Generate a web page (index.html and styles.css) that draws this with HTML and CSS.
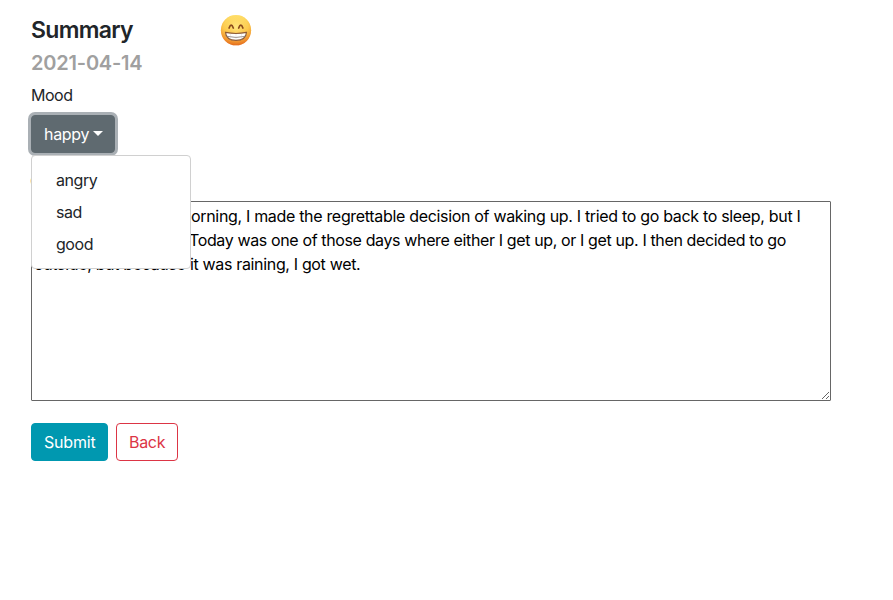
FILE: index.html
```
<!DOCTYPE html>
<html lang="en">
<head>
<meta charset="utf-8">
<title>Summary</title>
<link rel="stylesheet" href="styles.css">
</head>
<body>
<main class="entry">
  <header class="entry-head">
    <h1 class="title">Summary</h1>
    <svg class="mood-icon" viewBox="0 0 32 32" role="img" aria-label="happy">
      <defs>
        <linearGradient id="face" x1="0" y1="0" x2="0" y2="1">
          <stop offset="0" stop-color="#ffe574"/>
          <stop offset=".45" stop-color="#fcc64a"/>
          <stop offset=".8" stop-color="#f3932e"/>
          <stop offset="1" stop-color="#e2661c"/>
        </linearGradient>
        <radialGradient id="glow" cx=".5" cy=".4" r=".6">
          <stop offset="0" stop-color="#ffec88" stop-opacity=".85"/>
          <stop offset=".65" stop-color="#fed153" stop-opacity=".35"/>
          <stop offset="1" stop-color="#e5701b" stop-opacity=".6"/>
        </radialGradient>
      </defs>
      <circle cx="16" cy="15.200" r="15.100" fill="url(#face)"/>
      <circle cx="16" cy="15.200" r="15.100" fill="url(#glow)"/>
      <path d="M9.100 13Q11.200 7.400 13.300 13M18.700 13Q20.800 7.400 22.900 13" fill="none" stroke="#8a4a1c" stroke-width="1.700" stroke-linecap="round"/>
      <path d="M5.500 17.400Q16 19.600 26.500 17.400Q26 25.200 16 25.400Q6 25.200 5.500 17.400Z" fill="#fff" stroke="#8d5a36" stroke-width="1.100"/>
      <path d="M6.500 21.300Q16 23.600 25.500 21.300" fill="none" stroke="#8f8480" stroke-width=".9"/>
      <path d="M10.500 18.500V24.500M16 19V25M21.500 18.500V24.500" fill="none" stroke="#c9c3c0" stroke-width=".3"/>
    </svg>
  </header>
  <h2 class="date">2021-04-14</h2>
  <div class="label">Mood</div>
  <div class="dropdown">
    <button class="btn btn-toggle" type="button">happy<span class="caret"></span></button>
    <ul class="menu">
      <li>angry</li>
      <li>sad</li>
      <li>good</li>
    </ul>
  </div>
  <div class="label label-content">Content</div>
  <div class="content" contenteditable="true" spellcheck="false">
    <div class="line line-1"><span class="lead lead-1">When I woke this m</span>orning, I made the regrettable decision of waking up. I tried to go back to sleep, but I</div>
    <div class="line line-2"><span class="lead lead-2">couldn't sleep.</span>Today was one of those days where either I get up, or I get up. I then decided to go</div>
    <div class="line line-3"><span class="lead lead-3">outside, but because</span>it was raining, I got wet.</div>
  </div>
  <div class="actions">
    <button class="btn btn-submit" type="submit">Submit</button>
    <button class="btn btn-back" type="button">Back</button>
  </div>
</main>
</body>
</html>
```
FILE: styles.css
```
* { box-sizing: border-box; }
body {
  margin: 0;
  background: #fff;
  color: #212529;
  font: 16px/24px Inter, sans-serif;
  letter-spacing: -0.32px;
}
.entry { padding: 15px 31px; width: 862px; }
.entry-head { display: flex; height: 32px; }
.title { margin: 0; width: 189px; font-size: 23px; line-height: 30px; font-weight: 600; letter-spacing: -0.7px; }
.mood-icon { width: 32px; height: 32px; }
.date { margin: 4px 0 0; font-size: 20px; line-height: 24px; font-weight: 600; color: #a0a0a0; letter-spacing: -0.2px; }
.label { margin-top: 8px; letter-spacing: -0.5px; }
.dropdown { position: relative; height: 38px; margin-top: 8px; }
.btn {
  height: 38px;
  padding: 6px 12px;
  border: 1px solid;
  border-radius: 4px;
  font: inherit;
  letter-spacing: inherit;
  white-space: nowrap;
}
.btn-toggle {
  display: flex;
  align-items: center;
  width: 84px;
  color: #fff;
  background: #5f6a70;
  border-color: #5f6a70;
  box-shadow: 0 0 0 3px #aab0b5;
}
.caret { margin: 0 0 2px 4px; border: 5px solid transparent; border-top-color: #fff; border-bottom: 0; }
.menu {
  position: absolute;
  z-index: 2;
  top: 40px;
  left: 0;
  width: 160px;
  height: 114px;
  margin: 0;
  padding: 8px 0;
  list-style: none;
  background: #fff;
  border: 1px solid #d0d0d0;
  border-radius: 4px;
  letter-spacing: -0.45px;
}
.menu li { padding: 4px 24px; }
.label-content { margin-top: 16px; margin-left: -1px; }
.content {
  width: 800px;
  height: 200px;
  margin-top: 8px;
  padding: 2px;
  border: 1px solid #666;
  border-radius: 1px;
  overflow: auto;
  resize: both;
  color: #000;
}
.line { display: flex; white-space: nowrap; }
.line-2 { letter-spacing: -0.37px; }
.line-3 { letter-spacing: -0.34px; }
.lead { flex: none; overflow: hidden; }
.lead-1 { width: 157px; }
.lead-2 { width: 155px; }
.lead-3 { width: 156px; }
.actions { display: flex; gap: 8px; margin-top: 22px; }
.btn-submit { width: 77px; color: #fff; background: #0098b0; border-color: #0098b0; letter-spacing: -0.2px; }
.btn-back { width: 62px; color: #dc3545; background: #fff; border-color: #dc3545; }
```
